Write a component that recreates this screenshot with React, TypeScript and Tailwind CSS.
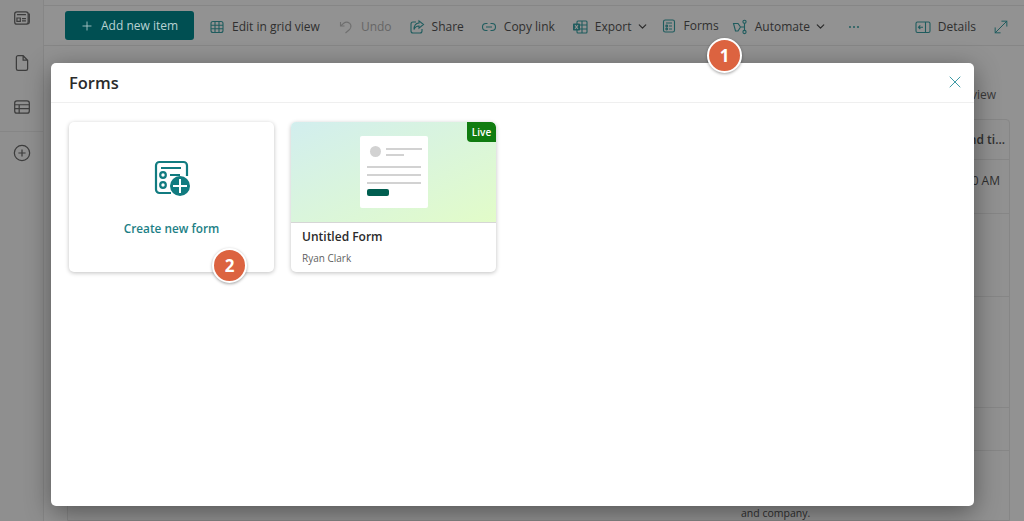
import { ChevronDown, MoveDiagonal, Plus, X } from 'lucide-react';
import type { ReactNode } from 'react';

const font = "font-['Open_Sans','Noto_Sans',sans-serif]";

function Icon({ children, className }: { children: ReactNode; className?: string }) {
  return (
    <svg viewBox="0 0 16 16" fill="none" stroke="currentColor" strokeWidth="1.100" className={className ?? 'h-4 w-4 text-[#1f5c5e]'}>
      {children}
    </svg>
  );
}

function GridIcon() {
  return (
    <Icon>
      <rect x="2" y="2.500" width="12" height="11" rx="2" />
      <path d="M2 6.200h12M2 9.800h12M6 2.500v11M10 2.500v11" />
    </Icon>
  );
}

function UndoIcon() {
  return (
    <Icon className="h-4 w-4 text-[#6f6f6f]">
      <path d="M2.500 3v4h4M2.700 6.800 6 4c2.500-1.800 6-.5 6.800 2 .5 1.800-.2 3.500-1.800 5L7.500 14" />
    </Icon>
  );
}

function ShareIcon() {
  return (
    <Icon>
      <path d="M7 3H4a2 2 0 0 0-2 2v7a2 2 0 0 0 2 2h7a2 2 0 0 0 2-2v-2" />
      <path d="M10 1.800 14.500 5.500 10 9.200V7C7.500 7 6 8 5 10.500 5 6.500 7 4.200 10 4z" />
    </Icon>
  );
}

function LinkIcon() {
  return (
    <Icon>
      <path d="M6.500 4.500H5a3.500 3.500 0 0 0 0 7h1.500M9.500 4.500H11a3.500 3.500 0 0 1 0 7H9.500M5 8h6" />
    </Icon>
  );
}

function ExcelIcon() {
  return (
    <Icon>
      <rect x="5" y="2" width="10" height="12" rx="1" />
      <path d="M5 6h10M5 10h10M10 2v12" />
      <rect x="1" y="4.500" width="7" height="7" rx="0.800" fill="currentColor" stroke="none" />
      <path d="m3 6.200 3 3.600m0-3.600-3 3.600" stroke="#929292" />
    </Icon>
  );
}

function FormsIcon() {
  return (
    <Icon>
      <rect x="2.500" y="2" width="11" height="12" rx="1.800" />
      <path d="M5 5h6M8 8h3M8 11h3" />
      <circle cx="5.700" cy="8" r="0.900" />
      <circle cx="5.700" cy="11" r="0.900" />
    </Icon>
  );
}

function AutomateIcon() {
  return (
    <Icon>
      <circle cx="12.500" cy="2.800" r="1.600" />
      <circle cx="12.500" cy="13" r="1.600" />
      <path d="M12.500 4.400v7M12.500 8H9M1.500 4.500h4.500L8.500 8 6 12H3.500z" />
    </Icon>
  );
}

function DetailsIcon() {
  return (
    <Icon>
      <rect x="1" y="3" width="14" height="10.500" rx="1.500" />
      <path d="M10.500 3v10.500M8 8.200H3.500M5.300 6.400 3.500 8.200 5.300 10" />
    </Icon>
  );
}

function ToolItem({ icon, label, dim, chevron, className }: { icon: ReactNode; label: string; dim?: boolean; chevron?: boolean; className?: string }) {
  return (
    <div className={`flex items-center gap-[7px] ${className ?? ''}`}>
      {icon}
      <span className={`whitespace-nowrap text-[12px] ${dim ? 'text-[#666]' : 'text-[#2f2f2f]'}`}>{label}</span>
      {chevron && <ChevronDown size={13} strokeWidth={2.2} className="ml-[-3px] text-[#2a2a2a]" />}
    </div>
  );
}

function Rail() {
  return (
    <div className="flex w-[44px] shrink-0 flex-col items-center border-r border-[#868686] bg-[#8f8f8f] pt-[9px] text-[#3d3d3d]">
      <Icon className="h-[18px] w-[18px]">
        <rect x="1.500" y="2.500" width="12" height="11" rx="2" />
        <path d="M13.500 4.500h1v7a2 2 0 0 1-1 1.800M3.500 5h8M3.500 8h3v3h-3zM8 8.500h3.500M8 10.500h3.500" />
      </Icon>
      <Icon className="mt-[27px] h-[18px] w-[18px]">
        <path d="M3 3a1.500 1.500 0 0 1 1.500-1.500H9L13 5.500V13a1.500 1.500 0 0 1-1.500 1.500h-7A1.500 1.500 0 0 1 3 13zM9 1.500V5.500h4" />
      </Icon>
      <Icon className="mt-[26px] h-[18px] w-[18px]">
        <rect x="1.500" y="2.500" width="13" height="11" rx="2" />
        <path d="M1.500 6h13M1.500 9.500h13M5.500 6v7.500" />
      </Icon>
      <div className="mt-[15px] w-full border-t border-[#868686]" />
      <Icon className="mt-[12px] h-[18px] w-[18px]">
        <circle cx="8" cy="8" r="6.800" />
        <path d="M8 4.800v6.400M4.800 8h6.400" />
      </Icon>
    </div>
  );
}

function Toolbar() {
  return (
    <div className="flex h-[41px] shrink-0 items-center border-y border-[#868686] bg-[#929292] pl-[21px] pr-[13px]">
      <div className="flex h-[29px] w-[129px] items-center gap-[7px] rounded-[3px] bg-[#004f52] pl-[15px] text-[#b9d2d2]">
        <Plus size={14} strokeWidth={1.4} />
        <span className="mt-[1px] whitespace-nowrap text-[12px]">Add new item</span>
      </div>
      <ToolItem className="ml-[15px] mt-[2px]" icon={<GridIcon />} label="Edit in grid view" />
      <ToolItem className="ml-[18px] mt-[2px]" icon={<UndoIcon />} label="Undo" dim />
      <ToolItem className="ml-[17px] mt-[2px]" icon={<ShareIcon />} label="Share" />
      <ToolItem className="ml-[17px] mt-[2px]" icon={<LinkIcon />} label="Copy link" />
      <ToolItem className="ml-[17px] mt-[2px]" icon={<ExcelIcon />} label="Export" chevron />
      <ToolItem className="ml-[12px]" icon={<FormsIcon />} label="Forms" />
      <ToolItem className="ml-[13px] mt-[2px]" icon={<AutomateIcon />} label="Automate" chevron />
      <div className="ml-[22px] mt-[2px] flex gap-[2px]">
        <span className="h-[2px] w-[2px] rounded-full bg-[#1f5c5e]" />
        <span className="h-[2px] w-[2px] rounded-full bg-[#1f5c5e]" />
        <span className="h-[2px] w-[2px] rounded-full bg-[#1f5c5e]" />
      </div>
      <div className="ml-auto mt-[2px] flex items-center gap-[15px]">
        <ToolItem icon={<DetailsIcon />} label="Details" />
        <MoveDiagonal size={20} strokeWidth={1.2} className="text-[#1f5c5e]" />
      </div>
    </div>
  );
}

function ListBehind() {
  return (
    <div className="flex min-h-0 flex-1 flex-col overflow-hidden pl-[23px] pr-[14px] text-[12px] text-[#2f2f2f]">
      <div className="flex h-[58px] shrink-0 items-end justify-end pr-[14px] text-[#3a3a3a]">All items view</div>
      <div className="mt-[15px] flex-1 rounded-t-[4px] border border-[#868686] bg-[#919191]">
        <div className="flex h-[40px] items-center justify-end border-b border-[#868686] pr-[4px] font-semibold">Date and ti...</div>
        <div className="flex h-[54px] justify-end border-b border-[#868686] pr-[9px] pt-[12px]">10:00 AM</div>
        <div className="h-[83px] border-b border-[#868686]" />
        <div className="h-[111px] border-b border-[#868686]" />
        <div className="h-[43px] border-b border-[#868686]" />
        <div className="pl-[673px] pt-[55px] text-[10.500px] leading-[14px]">and company.</div>
      </div>
    </div>
  );
}

function Badge({ n, className }: { n: number; className: string }) {
  return (
    <div className={`absolute z-10 flex h-[35px] w-[35px] items-center justify-center rounded-full border-[2px] border-white bg-[#dc6340] text-[17px] font-bold text-white shadow-[0_1px_3px_rgba(0,0,0,0.35)] ${className}`}>
      {n}
    </div>
  );
}

function CreateCard() {
  return (
    <div className="flex h-[150px] w-[205px] flex-col items-center rounded-[5px] bg-white pt-[36px] shadow-[0_1px_4px_rgba(0,0,0,0.25)]">
      <svg viewBox="0 0 40 40" className="h-[40px] w-[40px] text-[#117b80]" fill="none" stroke="currentColor" strokeWidth="2.200">
        <path d="M19 35H7.500A3.500 3.500 0 0 1 4 31.500V7.500A3.500 3.500 0 0 1 7.500 4h24A3.500 3.500 0 0 1 35 7.500V18" />
        <path d="M9 10h20M18 17h10" />
        <circle cx="11" cy="17" r="2.800" />
        <circle cx="11" cy="27" r="2.800" />
        <circle cx="28" cy="28" r="10" fill="currentColor" stroke="none" />
        <path d="M28 21v14M21 28h14" stroke="white" strokeWidth="2" />
      </svg>
      <span className="mt-[22px] text-[11.800px] font-semibold text-[#1d7f86]">Create new form</span>
    </div>
  );
}

function FormCard() {
  return (
    <div className="flex h-[150px] w-[205px] flex-col overflow-hidden rounded-[5px] bg-white shadow-[0_1px_4px_rgba(0,0,0,0.25)]">
      <div className="relative flex h-[101px] shrink-0 items-center justify-center border-b border-[#d6d6d6] bg-gradient-to-br from-[#d2eeee] to-[#e2fcc8]">
        <div className="h-[72px] w-[68px] rounded-[2px] bg-white px-[7px] pt-[10px]">
          <div className="flex items-center gap-[5px]">
            <span className="ml-[3px] h-[11px] w-[11px] shrink-0 rounded-full bg-[#d2d2d2]" />
            <div className="flex flex-col gap-[4px]">
              <span className="h-[2px] w-[36px] bg-[#d2d2d2]" />
              <span className="h-[2px] w-[18px] bg-[#d2d2d2]" />
            </div>
          </div>
          <div className="mt-[9px] h-[2px] w-[54px] bg-[#d2d2d2]" />
          <div className="mt-[6px] h-[2px] w-[54px] bg-[#d2d2d2]" />
          <div className="mt-[6px] h-[2px] w-[54px] bg-[#d2d2d2]" />
          <div className="mt-[5px] h-[7px] w-[22px] rounded-[2px] bg-[#005e50]" />
        </div>
        <div className="absolute right-0 top-0 flex h-[20px] w-[29px] items-center justify-center rounded-bl-[4px] rounded-tr-[5px] bg-[#107c10] text-[10px] font-semibold text-white">
          Live
        </div>
      </div>
      <div className="px-[11px] pt-[5px]">
        <div className="text-[12px] font-semibold leading-[17px] text-[#2b2b2b]">Untitled Form</div>
        <div className="mt-[6px] text-[10px] leading-[14px] text-[#5f5f5f]">Ryan Clark</div>
      </div>
    </div>
  );
}

function FormsDialog() {
  return (
    <div className="absolute left-[51px] top-[63px] z-0 flex h-[443px] w-[923px] flex-col rounded-[5px] bg-white shadow-[0_6px_26px_rgba(0,0,0,0.42)]">
      <div className="flex h-[40px] shrink-0 items-center justify-between border-b border-[#efefef] pl-[18px] pr-[9px]">
        <span className="mt-[2px] text-[16.500px] font-semibold text-[#2b2b2b]">Forms</span>
        <X size={20} strokeWidth={1.2} className="mb-[2px] text-[#3e9aa5]" />
      </div>
      <div className="flex gap-[17px] pl-[18px] pt-[19px]">
        <CreateCard />
        <FormCard />
      </div>
    </div>
  );
}

export default function App() {
  return (
    <div className={`relative flex h-[521px] w-[1024px] overflow-hidden bg-[#929292] ${font}`}>
      <Rail />
      <div className="flex min-w-0 flex-1 flex-col pt-[5px]">
        <Toolbar />
        <ListBehind />
      </div>
      <FormsDialog />
      <Badge n={1} className="left-[707px] top-[38px]" />
      <Badge n={2} className="left-[212px] top-[248px]" />
    </div>
  );
}
